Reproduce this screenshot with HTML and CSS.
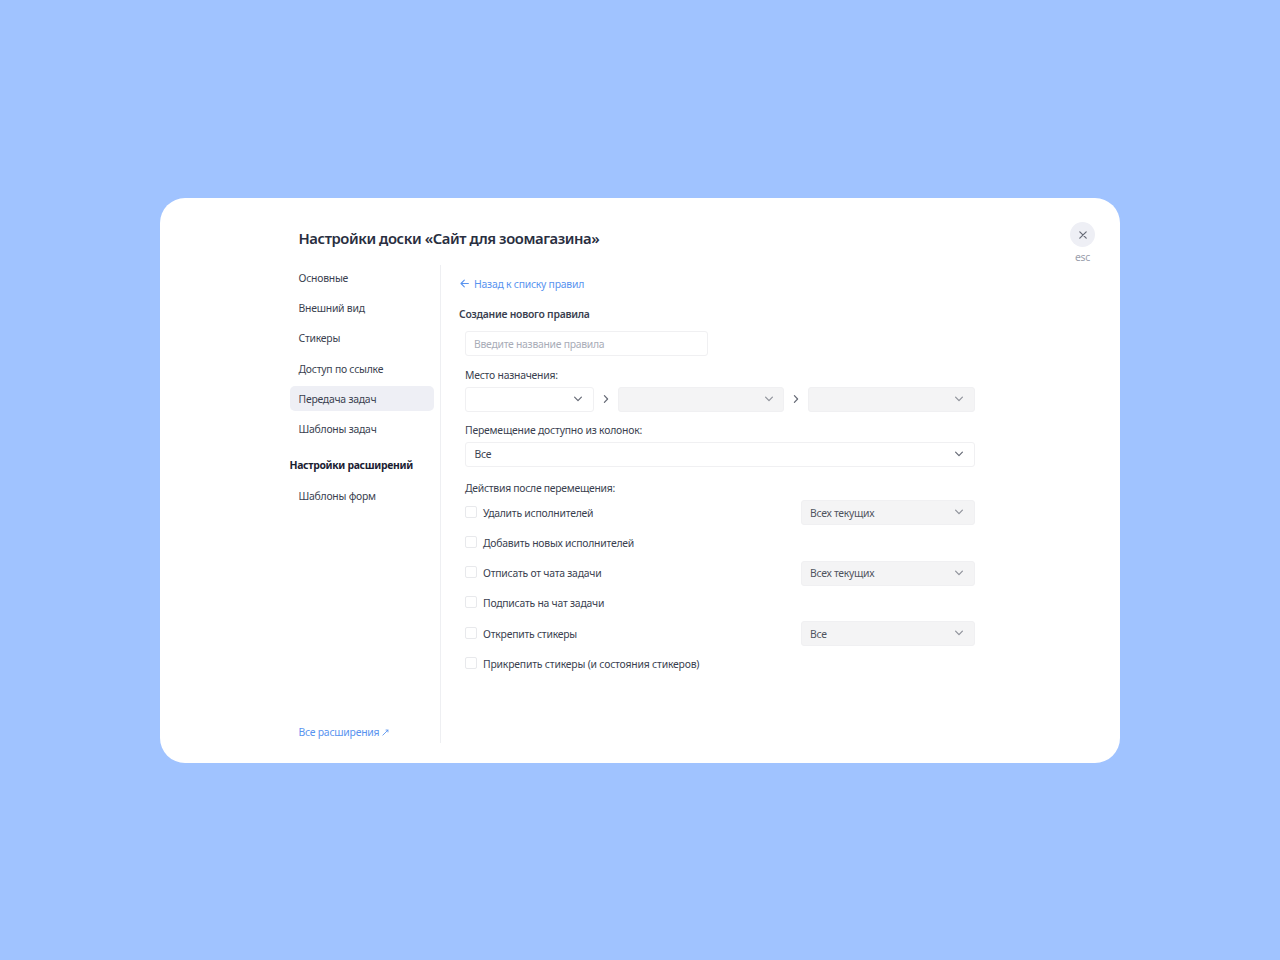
FILE: index.html
```html
<!DOCTYPE html>
<html lang="ru">
<head>
<meta charset="utf-8">
<title>Настройки доски</title>
<link rel="stylesheet" href="styles.css">
</head>
<body>
<svg class="defs" width="0" height="0">
  <symbol id="chevron" viewBox="0 0 10 10"><path d="M1.6 3.2 5 6.6 8.4 3.2"/></symbol>
  <symbol id="next" viewBox="0 0 10 10"><path d="M3.4 1.6 6.6 5 3.4 8.4"/></symbol>
</svg>
<main class="modal">
  <div class="content">
    <h1 class="title">Настройки доски «Сайт для зоомагазина»</h1>
    <div class="columns">
      <nav class="sidebar">
        <a class="nav-item">Основные</a>
        <a class="nav-item">Внешний вид</a>
        <a class="nav-item">Стикеры</a>
        <a class="nav-item">Доступ по ссылке</a>
        <a class="nav-item active">Передача задач</a>
        <a class="nav-item">Шаблоны задач</a>
        <h2 class="nav-heading">Настройки расширений</h2>
        <a class="nav-item">Шаблоны форм</a>
        <a class="nav-item all-link">Все расширения <svg class="out" viewBox="0 0 8 8"><path d="M1 7 6.8 1.2M4.6 1.2h2.2v2.2"/></svg></a>
      </nav>
      <section class="rule">
        <a class="back"><svg class="arrow" viewBox="0 0 10 10"><path d="M9.3 5H1.2M4.8 1.3 1.1 5l3.7 3.7"/></svg>Назад к списку правил</a>
        <h2 class="rule-heading">Создание нового правила</h2>
        <form class="form">
          <input class="name" type="text" placeholder="Введите название правила">
          <p class="label label-place">Место назначения:</p>
          <div class="path">
            <div class="select first"><svg class="icon"><use href="#chevron"/></svg></div>
            <svg class="icon sep"><use href="#next"/></svg>
            <div class="select disabled"><svg class="icon"><use href="#chevron"/></svg></div>
            <svg class="icon sep"><use href="#next"/></svg>
            <div class="select disabled"><svg class="icon"><use href="#chevron"/></svg></div>
          </div>
          <p class="label label-from">Перемещение доступно из колонок:</p>
          <div class="select"><span>Все</span><svg class="icon"><use href="#chevron"/></svg></div>
          <p class="label label-after">Действия после перемещения:</p>
          <div class="actions">
            <div class="action"><i class="check"></i><span>Удалить исполнителей</span><div class="select disabled"><span>Всех текущих</span><svg class="icon"><use href="#chevron"/></svg></div></div>
            <div class="action"><i class="check"></i><span>Добавить новых исполнителей</span></div>
            <div class="action"><i class="check"></i><span>Отписать от чата задачи</span><div class="select disabled"><span>Всех текущих</span><svg class="icon"><use href="#chevron"/></svg></div></div>
            <div class="action"><i class="check"></i><span>Подписать на чат задачи</span></div>
            <div class="action"><i class="check"></i><span>Открепить стикеры</span><div class="select disabled"><span>Все</span><svg class="icon"><use href="#chevron"/></svg></div></div>
            <div class="action"><i class="check"></i><span class="wide">Прикрепить стикеры (и состояния стикеров)</span></div>
          </div>
        </form>
      </section>
    </div>
  </div>
  <div class="close">
    <button class="close-btn" type="button" aria-label="Закрыть"><svg class="cross" viewBox="0 0 8 8"><path d="M.8.8l6.4 6.4M7.2.8.8 7.2"/></svg></button>
    <span>esc</span>
  </div>
</main>
</body>
</html>
```
FILE: styles.css
```css
* { box-sizing: border-box; }
body {
  margin: 0;
  height: 960px;
  display: flex;
  justify-content: center;
  align-items: center;
  overflow: hidden;
  background: #a0c3ff;
  font: 10.4px/16px "Noto Sans", "Open Sans", sans-serif;
  letter-spacing: -.23px;
  color: #3a3f50;
}
h1, h2, p { margin: 0; }
svg { display: block; fill: none; stroke: currentColor; stroke-linecap: round; stroke-linejoin: round; }
.defs { position: absolute; }
.modal {
  width: 960px;
  height: 565.5px;
  margin-top: 1px;
  padding: 25px 25px 20px 129.5px;
  display: flex;
  justify-content: space-between;
  align-items: flex-start;
  background: #fff;
  border-radius: 25px;
}
.content { width: 685px; }
.title {
  height: 42.5px;
  padding: 4px 0 0 9px;
  font-size: 14.8px;
  line-height: 22px;
  font-weight: 600;
  letter-spacing: -.42px;
  color: #292e40;
  white-space: nowrap;
}
.columns { display: flex; height: 478px; }
.sidebar {
  width: 151.5px;
  padding-right: 6px;
  display: flex;
  flex-direction: column;
  gap: 6px;
  border-right: 1px solid #eeeff2;
}
.nav-item {
  height: 24.25px;
  padding: 1px 9px 0;
  display: flex;
  align-items: center;
  border-radius: 5px;
  white-space: nowrap;
}
.active { background: #eeeff5; }
.nav-heading {
  height: 24.25px;
  margin-top: 6px;
  font-size: 10.4px;
  line-height: 25px;
  font-weight: 700;
  letter-spacing: -.31px;
  color: #1a2031;
  white-space: nowrap;
}
.all-link { margin-top: auto; color: #5893ef; }
.out { width: 7px; height: 7px; margin: 2px 0 0 3px; stroke-width: 1; }
.rule { flex: 1; padding: 11px 0 0 18px; }
.back { display: flex; align-items: center; color: #5893ef; }
.arrow { width: 9px; height: 9px; margin: -2px 5px 0 1px; stroke-width: 1.2; }
.rule-heading { margin-top: 14px; font-size: 10.4px; line-height: 16px; font-weight: 600; letter-spacing: -.25px; }
.form { padding: 9px 0 0 6px; }
.name {
  display: block;
  width: 242.5px;
  height: 25px;
  padding: 1px 8px 0;
  border: 1px solid #f0f0f2;
  border-radius: 3px;
  font: inherit;
  letter-spacing: -.27px;
}
.name::placeholder { color: #a8acb7; opacity: 1; }
.label-place { margin: 10.5px 0 4px; }
.label-from { margin: 10.5px 0 3.5px; letter-spacing: -.2px; }
.label-after { margin: 13.5px 0 4px; letter-spacing: -.27px; }
.path { display: flex; align-items: center; }
.select {
  flex: 1;
  height: 25px;
  padding: 0 9.5px 0 8.5px;
  display: flex;
  align-items: center;
  border: 1px solid #f0f0f2;
  border-radius: 3px;
}
.select .icon { margin: -1px 0 0 auto; }
.first { flex: none; width: 129px; padding-right: 10px; }
.disabled { background: #f4f4f5; color: #50545f; letter-spacing: -.28px; }
.disabled .icon { opacity: .7; }
.icon { width: 10px; height: 10px; color: #666a76; stroke-width: 1.2; }
.sep { margin: 0 7px; flex: none; }
.actions { display: flex; flex-direction: column; gap: 5.2px; }
.action { height: 25px; display: flex; align-items: center; gap: 6px; }
.action .select { flex: none; width: 174px; margin-left: auto; }
.check { width: 12px; height: 12px; margin-top: -2px; border: 1px solid #e8e9ec; border-radius: 2px; }
.wide { letter-spacing: -.19px; }
.close { display: flex; flex-direction: column; align-items: center; gap: 2px; margin-top: -.75px; color: #9a9eac; }
.close-btn {
  width: 25px;
  height: 25px;
  padding: 0;
  display: grid;
  place-items: center;
  border: 0;
  border-radius: 50%;
  background: #eeeff5;
  color: #666a76;
}
.cross { width: 8px; height: 8px; stroke-width: 1.2; }
```
